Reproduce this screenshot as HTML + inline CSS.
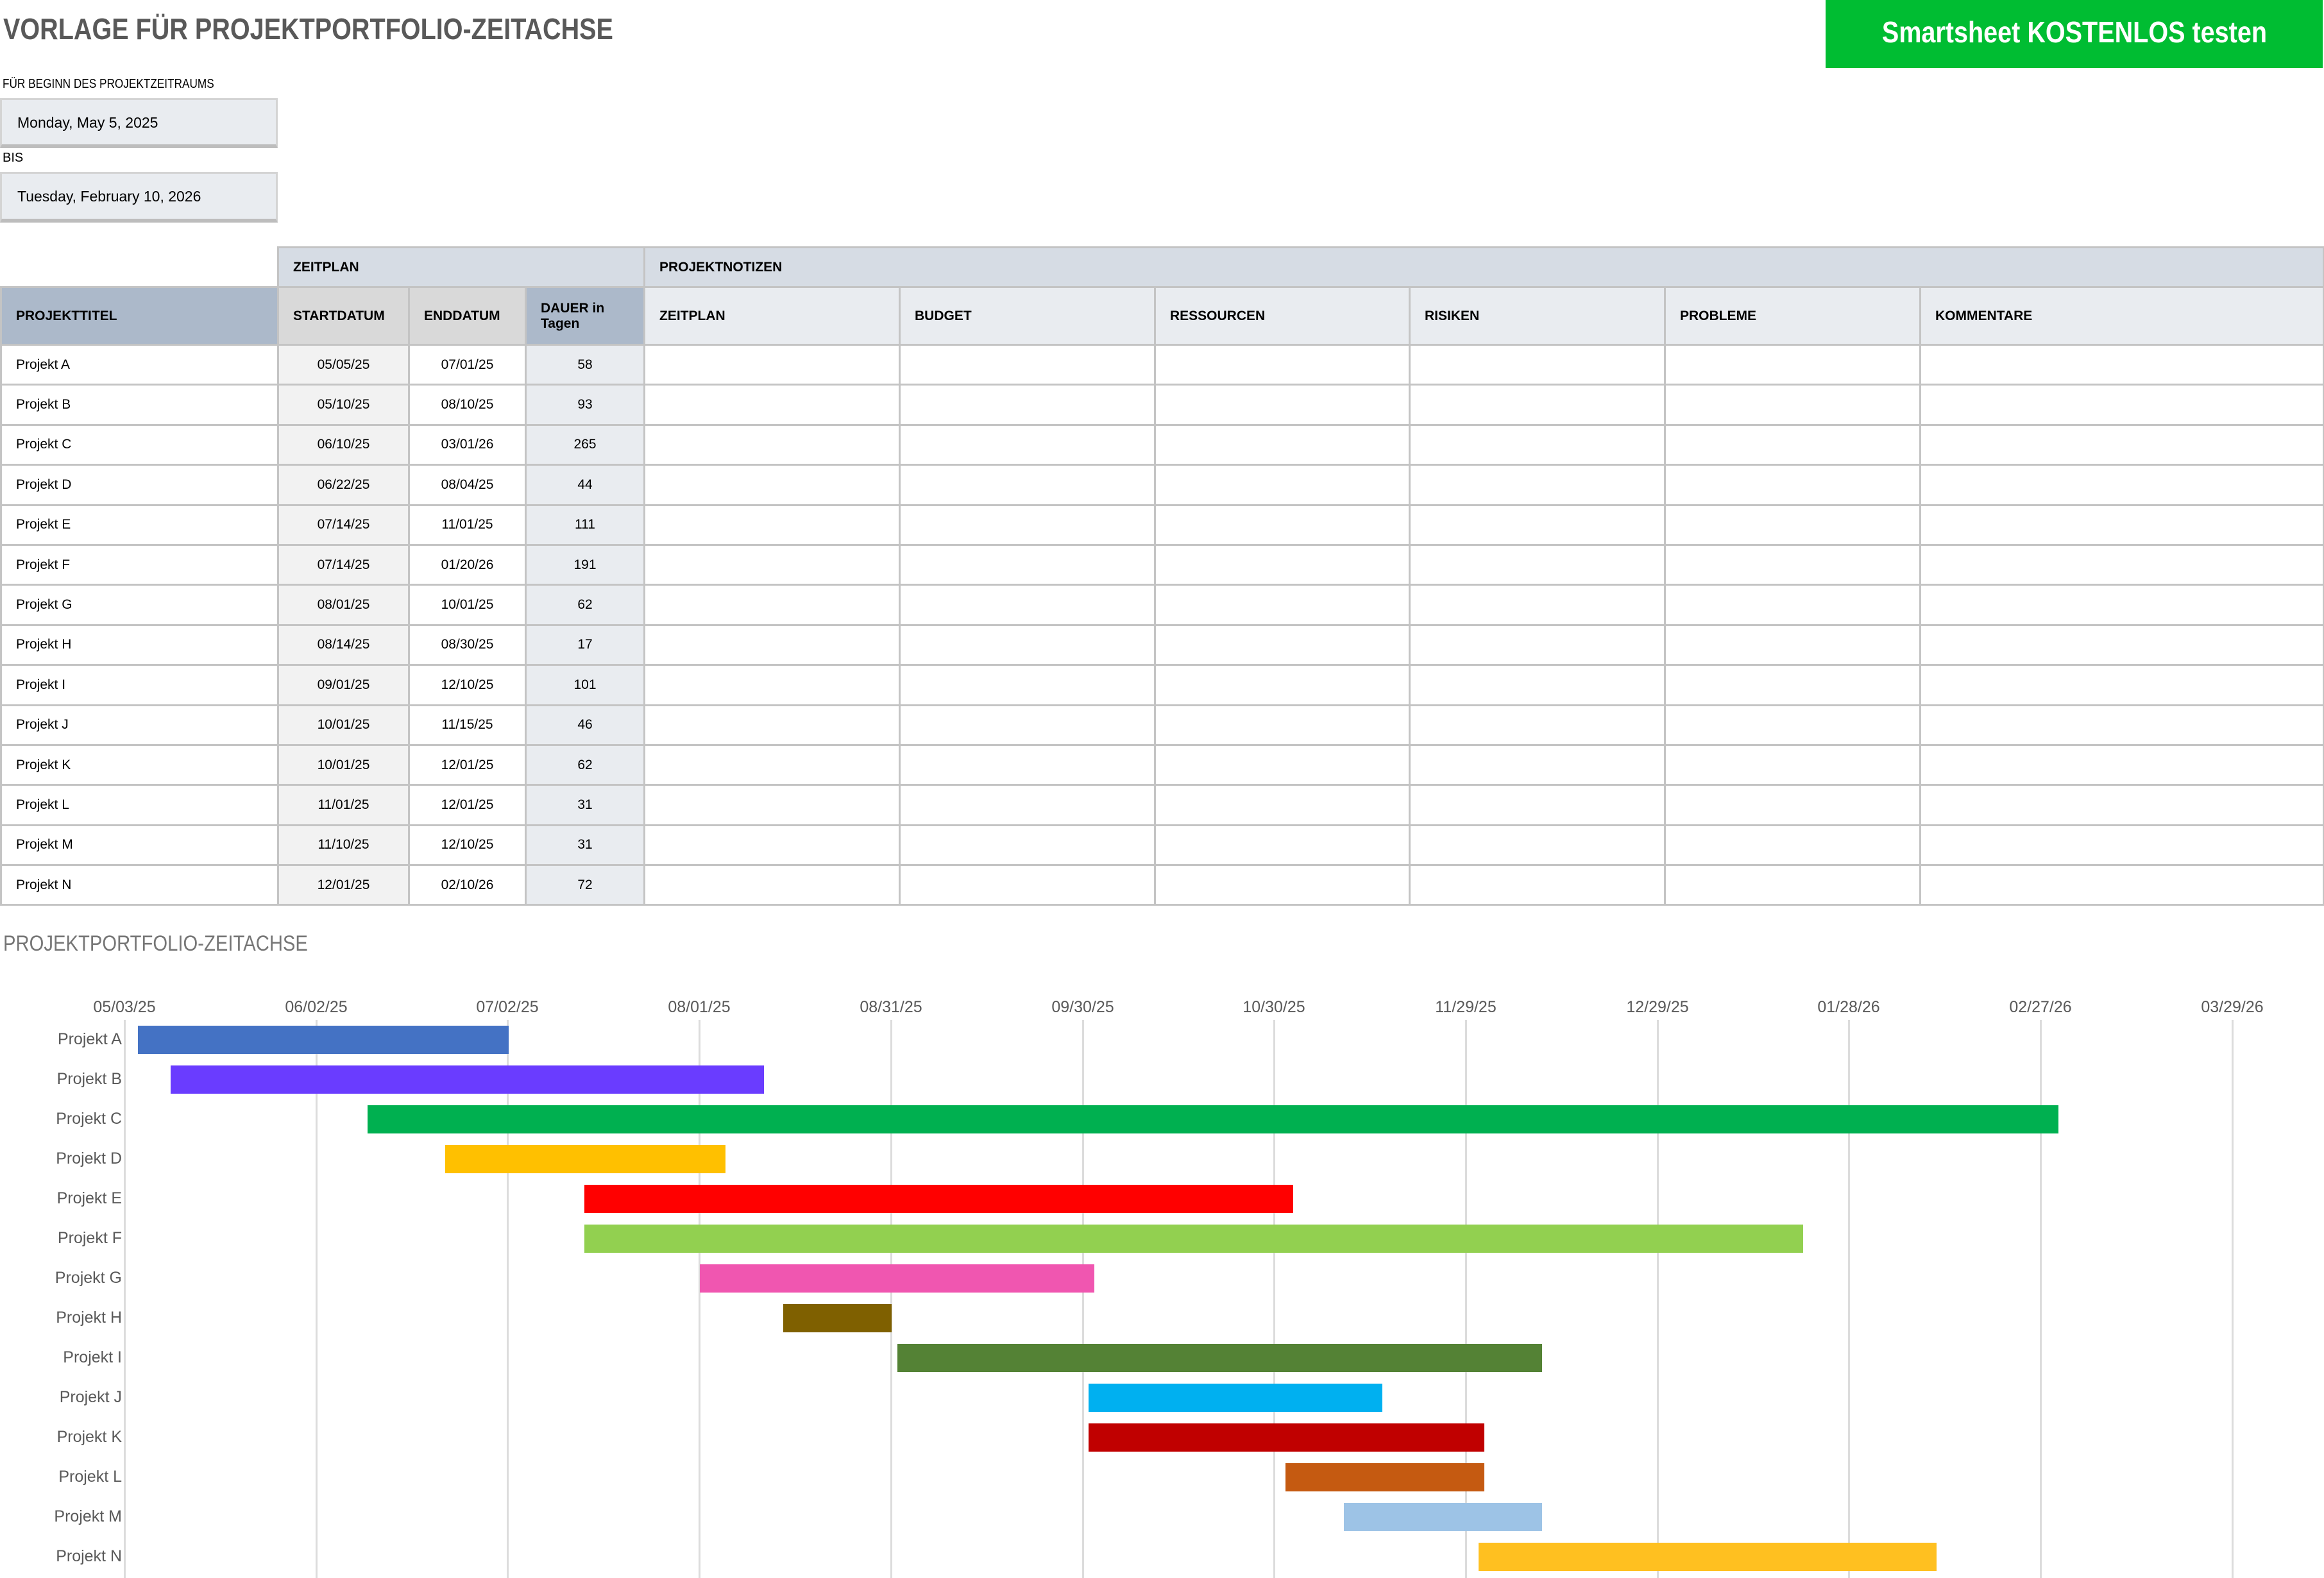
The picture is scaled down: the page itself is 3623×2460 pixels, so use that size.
<!DOCTYPE html>
<html><head><meta charset="utf-8">
<style>
*{margin:0;padding:0;box-sizing:border-box}
body{width:3623px;height:2460px;background:#fff;font-family:"Liberation Sans",sans-serif;position:relative;overflow:hidden;color:#000}
.a{position:absolute;white-space:nowrap}
.sx{display:inline-block;transform:scaleX(.86);transform-origin:left center}
table{position:absolute;left:0;top:384px;border-collapse:collapse;table-layout:fixed;width:3621px}
td{border:3px solid #c4c4c4;font-size:21px;padding:0 22px;height:62.4px;white-space:nowrap;overflow:hidden}
td.c{text-align:center;padding:0}
.h1 td{height:62px;font-weight:bold;background:#d6dce4}
.h2 td{height:90px;font-weight:bold;background:#e9ecf0;line-height:24px}
.gl{position:absolute;top:1590px;height:870px;width:3px;background:#dcdcdc}
.lbl{position:absolute;width:170px;text-align:right;left:20px;font-size:25px;color:#595959}
.ax{position:absolute;top:1556px;font-size:25px;color:#595959;width:200px;text-align:center}
.bar{position:absolute;height:44px}
</style></head><body>
<div class="a" style="left:5px;top:18px;font-size:46px;font-weight:bold;color:#595959"><span class="sx">VORLAGE FÜR PROJEKTPORTFOLIO-ZEITACHSE</span></div>
<div class="a" style="left:2846px;top:0;width:775px;height:106px;background:#00bd32;color:#fff;font-weight:bold;font-size:46px;line-height:100px;text-align:center"><span class="sx" style="transform-origin:center">Smartsheet KOSTENLOS testen</span></div>
<div class="a" style="left:4px;top:120px;font-size:20px"><span class="sx">FÜR BEGINN DES PROJEKTZEITRAUMS</span></div>
<div class="a" style="left:0;top:153px;width:433px;height:78px;background:#e9ecf0;border:3px solid #d4d4d4;border-bottom:6px solid #bdbdbd;font-size:23px;line-height:70px;padding-left:24px">Monday, May 5, 2025</div>
<div class="a" style="left:4px;top:235px;font-size:20px">BIS</div>
<div class="a" style="left:0;top:268px;width:433px;height:79px;background:#e9ecf0;border:3px solid #d4d4d4;border-bottom:6px solid #bdbdbd;font-size:23px;line-height:70px;padding-left:24px">Tuesday, February 10, 2026</div>

<table>
<colgroup><col style="width:432px"><col style="width:204px"><col style="width:182px"><col style="width:185px"><col style="width:398px"><col style="width:398px"><col style="width:397px"><col style="width:398px"><col style="width:398px"><col style="width:629px"></colgroup>
<tr class="h1"><td style="background:#fff;border-top-color:#fff;border-left-color:#fff"></td><td colspan="3">ZEITPLAN</td><td colspan="6">PROJEKTNOTIZEN</td></tr>
<tr class="h2"><td style="background:#acb9ca">PROJEKTTITEL</td><td style="background:#d9d9d9">STARTDATUM</td><td style="background:#d9d9d9">ENDDATUM</td><td style="background:#acb9ca">DAUER in<br>Tagen</td><td>ZEITPLAN</td><td>BUDGET</td><td>RESSOURCEN</td><td>RISIKEN</td><td>PROBLEME</td><td>KOMMENTARE</td></tr>
<tr><td>Projekt A</td><td class="c" style="background:#f2f2f2">05/05/25</td><td class="c">07/01/25</td><td class="c" style="background:#e9ecf0">58</td><td></td><td></td><td></td><td></td><td></td><td></td></tr>
<tr><td>Projekt B</td><td class="c" style="background:#f2f2f2">05/10/25</td><td class="c">08/10/25</td><td class="c" style="background:#e9ecf0">93</td><td></td><td></td><td></td><td></td><td></td><td></td></tr>
<tr><td>Projekt C</td><td class="c" style="background:#f2f2f2">06/10/25</td><td class="c">03/01/26</td><td class="c" style="background:#e9ecf0">265</td><td></td><td></td><td></td><td></td><td></td><td></td></tr>
<tr><td>Projekt D</td><td class="c" style="background:#f2f2f2">06/22/25</td><td class="c">08/04/25</td><td class="c" style="background:#e9ecf0">44</td><td></td><td></td><td></td><td></td><td></td><td></td></tr>
<tr><td>Projekt E</td><td class="c" style="background:#f2f2f2">07/14/25</td><td class="c">11/01/25</td><td class="c" style="background:#e9ecf0">111</td><td></td><td></td><td></td><td></td><td></td><td></td></tr>
<tr><td>Projekt F</td><td class="c" style="background:#f2f2f2">07/14/25</td><td class="c">01/20/26</td><td class="c" style="background:#e9ecf0">191</td><td></td><td></td><td></td><td></td><td></td><td></td></tr>
<tr><td>Projekt G</td><td class="c" style="background:#f2f2f2">08/01/25</td><td class="c">10/01/25</td><td class="c" style="background:#e9ecf0">62</td><td></td><td></td><td></td><td></td><td></td><td></td></tr>
<tr><td>Projekt H</td><td class="c" style="background:#f2f2f2">08/14/25</td><td class="c">08/30/25</td><td class="c" style="background:#e9ecf0">17</td><td></td><td></td><td></td><td></td><td></td><td></td></tr>
<tr><td>Projekt I</td><td class="c" style="background:#f2f2f2">09/01/25</td><td class="c">12/10/25</td><td class="c" style="background:#e9ecf0">101</td><td></td><td></td><td></td><td></td><td></td><td></td></tr>
<tr><td>Projekt J</td><td class="c" style="background:#f2f2f2">10/01/25</td><td class="c">11/15/25</td><td class="c" style="background:#e9ecf0">46</td><td></td><td></td><td></td><td></td><td></td><td></td></tr>
<tr><td>Projekt K</td><td class="c" style="background:#f2f2f2">10/01/25</td><td class="c">12/01/25</td><td class="c" style="background:#e9ecf0">62</td><td></td><td></td><td></td><td></td><td></td><td></td></tr>
<tr><td>Projekt L</td><td class="c" style="background:#f2f2f2">11/01/25</td><td class="c">12/01/25</td><td class="c" style="background:#e9ecf0">31</td><td></td><td></td><td></td><td></td><td></td><td></td></tr>
<tr><td>Projekt M</td><td class="c" style="background:#f2f2f2">11/10/25</td><td class="c">12/10/25</td><td class="c" style="background:#e9ecf0">31</td><td></td><td></td><td></td><td></td><td></td><td></td></tr>
<tr><td>Projekt N</td><td class="c" style="background:#f2f2f2">12/01/25</td><td class="c">02/10/26</td><td class="c" style="background:#e9ecf0">72</td><td></td><td></td><td></td><td></td><td></td><td></td></tr>
</table>

<div class="a" style="left:5px;top:1452px;font-size:34px;color:#767676"><span class="sx">PROJEKTPORTFOLIO-ZEITACHSE</span></div>

<div class="gl" style="left:193px"></div><div class="gl" style="left:492px"></div><div class="gl" style="left:790px"></div><div class="gl" style="left:1089px"></div><div class="gl" style="left:1388px"></div><div class="gl" style="left:1687px"></div><div class="gl" style="left:1985px"></div><div class="gl" style="left:2284px"></div><div class="gl" style="left:2583px"></div><div class="gl" style="left:2881px"></div><div class="gl" style="left:3180px"></div><div class="gl" style="left:3479px"></div>

<div class="ax" style="left:94px">05/03/25</div><div class="ax" style="left:393px">06/02/25</div><div class="ax" style="left:691px">07/02/25</div><div class="ax" style="left:990px">08/01/25</div><div class="ax" style="left:1289px">08/31/25</div><div class="ax" style="left:1588px">09/30/25</div><div class="ax" style="left:1886px">10/30/25</div><div class="ax" style="left:2185px">11/29/25</div><div class="ax" style="left:2484px">12/29/25</div><div class="ax" style="left:2782px">01/28/26</div><div class="ax" style="left:3081px">02/27/26</div><div class="ax" style="left:3380px">03/29/26</div>

<div class="lbl" style="top:1606px">Projekt A</div><div class="bar" style="top:1599px;left:215px;width:578px;background:#4472c4"></div>
<div class="lbl" style="top:1668px">Projekt B</div><div class="bar" style="top:1661px;left:266px;width:925px;background:#6a3cff"></div>
<div class="lbl" style="top:1730px">Projekt C</div><div class="bar" style="top:1723px;left:573px;width:2636px;background:#00b050"></div>
<div class="lbl" style="top:1792px">Projekt D</div><div class="bar" style="top:1785px;left:694px;width:437px;background:#ffc000"></div>
<div class="lbl" style="top:1854px">Projekt E</div><div class="bar" style="top:1847px;left:911px;width:1105px;background:#ff0000"></div>
<div class="lbl" style="top:1916px">Projekt F</div><div class="bar" style="top:1909px;left:911px;width:1900px;background:#92d050"></div>
<div class="lbl" style="top:1978px">Projekt G</div><div class="bar" style="top:1971px;left:1091px;width:615px;background:#f056b0"></div>
<div class="lbl" style="top:2040px">Projekt H</div><div class="bar" style="top:2033px;left:1221px;width:169px;background:#7f6000"></div>
<div class="lbl" style="top:2102px">Projekt I</div><div class="bar" style="top:2095px;left:1399px;width:1005px;background:#548235"></div>
<div class="lbl" style="top:2164px">Projekt J</div><div class="bar" style="top:2157px;left:1697px;width:458px;background:#00b0f0"></div>
<div class="lbl" style="top:2226px">Projekt K</div><div class="bar" style="top:2219px;left:1697px;width:617px;background:#c00000"></div>
<div class="lbl" style="top:2288px">Projekt L</div><div class="bar" style="top:2281px;left:2004px;width:310px;background:#c55a11"></div>
<div class="lbl" style="top:2350px">Projekt M</div><div class="bar" style="top:2343px;left:2095px;width:309px;background:#9dc3e6"></div>
<div class="lbl" style="top:2412px">Projekt N</div><div class="bar" style="top:2405px;left:2305px;width:714px;background:#ffc020"></div>
</body></html>
